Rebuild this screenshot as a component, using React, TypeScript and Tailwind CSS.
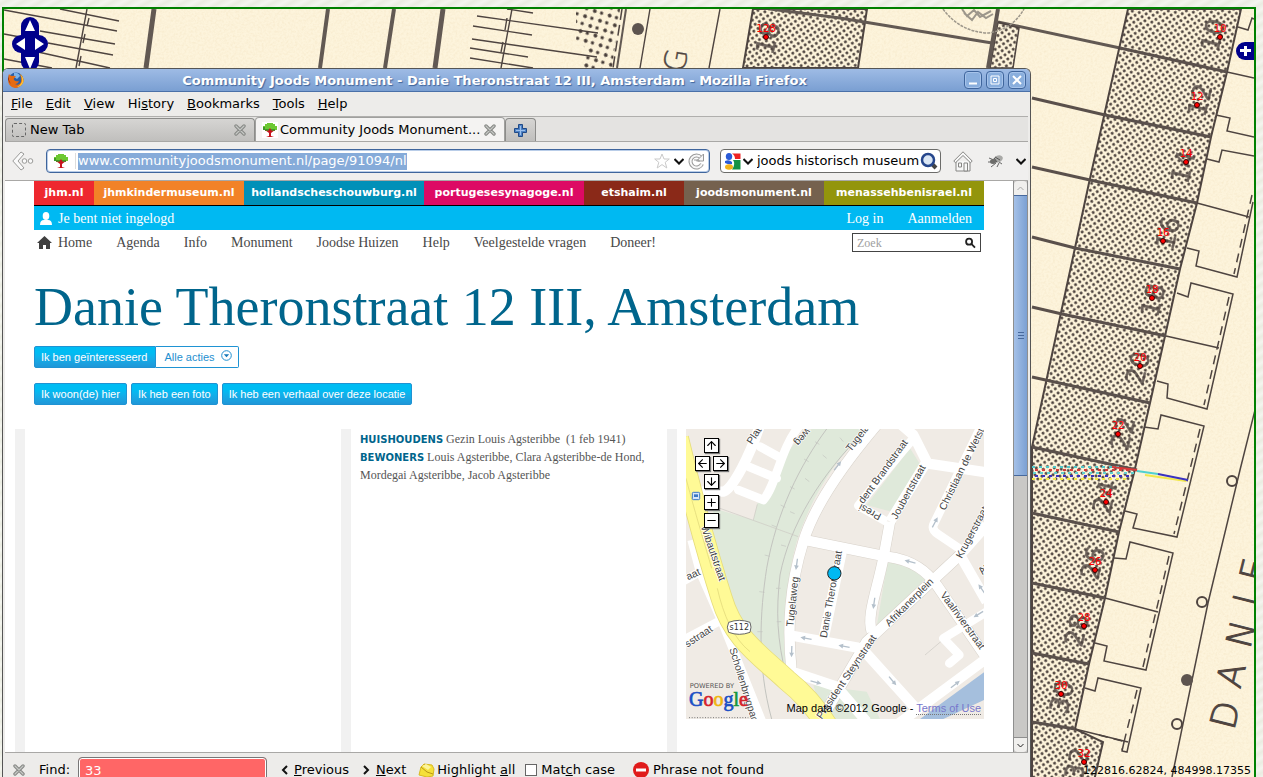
import { ReactNode } from "react";
import { Plus, Minus, ArrowUp, ArrowDown, ArrowLeft, ArrowRight } from "lucide-react";

const houses = [
  { n: "128", x: 766, y: 37, hx: 768, hy: 38 },
  { n: "10", x: 1220, y: 37, hx: 1213, hy: 35 },
  { n: "12", x: 1197, y: 105, hx: 1200, hy: 100 },
  { n: "14", x: 1186, y: 162, hx: 1183, hy: 167 },
  { n: "16", x: 1163, y: 241, hx: 1168, hy: 233 },
  { n: "18", x: 1152, y: 298, hx: 1153, hy: 300 },
  { n: "20", x: 1140, y: 366, hx: 1138, hy: 368 },
  { n: "22", x: 1118, y: 434, hx: 1123, hy: 433 },
  { n: "24", x: 1106, y: 502, hx: 1105, hy: 497 },
  { n: "26", x: 1095, y: 570, hx: 1093, hy: 563 },
  { n: "28", x: 1084, y: 626, hx: 1077, hy: 630 },
  { n: "30", x: 1061, y: 694, hx: 1062, hy: 697 },
  { n: "32", x: 1084, y: 762, hx: 1077, hy: 764 },
];

const streetLetters = [
  { c: "D", x: 1237, y: 718 },
  { c: "A", x: 1243, y: 678 },
  { c: "N", x: 1253, y: 637 },
  { c: "I", x: 1258, y: 603 },
  { c: "E", x: 1266, y: 573 },
];

const menu = ["_File", "_Edit", "_View", "Hi_story", "_Bookmarks", "_Tools", "_Help"];

const sites = [
  { name: "jhm.nl", color: "bg-[#ee282f]" },
  { name: "jhmkindermuseum.nl", color: "bg-[#f28227]" },
  { name: "hollandscheschouwburg.nl", color: "bg-[#0090b8]" },
  { name: "portugesesynagoge.nl", color: "bg-[#dd0a64]" },
  { name: "etshaim.nl", color: "bg-[#8a2918]" },
  { name: "joodsmonument.nl", color: "bg-[#75614e]" },
  { name: "menassehbenisrael.nl", color: "bg-[#93950b]" },
];

const navLinks = ["Agenda", "Info", "Monument", "Joodse Huizen", "Help", "Veelgestelde vragen", "Doneer!"];

const streets = [
  { t: "Tugelaweg", x: 512, y: 82, r: -52 },
  { t: "dent Brandstraat", x: 550, y: 238, r: -54 },
  { t: "Presi", x: 606, y: 268, r: 207 },
  { t: "Joubertstraat", x: 650, y: 285, r: -61 },
  { t: "Christiaan de Wetstraat", x: 795, y: 258, r: -64 },
  { t: "Krugerstraat", x: 845, y: 402, r: -62 },
  { t: "Afrikanerplein", x: 628, y: 606, r: -45 },
  { t: "Vaalrivierstraat", x: 780, y: 510, r: 54 },
  { t: "Danie Theronstraat", x: 440, y: 640, r: -80 },
  { t: "Tugelaweg", x: 340, y: 606, r: -84 },
  { t: "President Steynstraat", x: 425, y: 884, r: -56 },
  { t: "Schollenbrugpad", x: 148, y: 672, r: 73 },
  { t: "Wibautstraat", x: 62, y: 305, r: 71 },
  { t: "aat", x: 24, y: 466, r: -25 },
  { t: "sstraat", x: 22, y: 668, r: -33 },
  { t: "Plats", x: 216, y: 60, r: -57 },
  { t: "weg", x: 378, y: 8, r: 130 },
  { t: "Ar", x: 908, y: 450, r: -50 },
];

const arrows = [
  [473, 122, -52], [350, 418, 98], [378, 640, 190], [492, 664, 190], [335, 680, 92],
  [408, 772, 15], [690, 410, 195], [765, 292, -62], [582, 535, 98], [638, 768, 50],
  [826, 778, -38], [895, 568, 148], [905, 492, 235],
];

function OldMap() {
  return (
    <svg className="absolute top-0 left-0" width="1250" height="772" viewBox="4 9 1250 772" fill="none" stroke="#4e4440">
      <defs>
        <pattern id="hatch" width="5" height="5" patternUnits="userSpaceOnUse" patternTransform="rotate(-34)">
          <circle cx="2.5" cy="2.5" r="1.4" fill="#463c38" stroke="none" />
        </pattern>
        <pattern id="sparse" width="11" height="11" patternUnits="userSpaceOnUse" patternTransform="rotate(-28)">
          <circle cx="3" cy="3" r="1.9" fill="#463c38" stroke="none" />
          <circle cx="8" cy="8" r="1.7" fill="#463c38" stroke="none" />
        </pattern>
        <filter id="grain" x="0" y="0" width="100%" height="100%">
          <feTurbulence type="fractalNoise" baseFrequency="0.45" numOctaves="3" />
          <feColorMatrix values="0 0 0 0 0.85  0 0 0 0 0.7  0 0 0 0 0.45  0.6 0 0 0 -0.22" />
        </filter>
      </defs>
      <rect x="4" y="9" width="1250" height="772" filter="url(#grain)" stroke="none" />

      {/* gardens, top left */}
      <g strokeWidth="1.4">
        <path d="M4 10 117 31M60 9 119 21M40 31 115 44M4 34 20 37M48 43 113 55M4 59 52 68M38 52 110 68" />
        <path d="M87 9 76 68M89 18 87 26M85 34 83 43M81 56 79 66" />
        <path d="M507 9 533 13M477 16 598 33M473 26 532 35M472 39 597 57M470 48 528 57M470 58 533 68" />
        <path d="M512 9 501 68M507 18 505 30M503 42 501 52M650 9 640 68M720 9 709 68" />
      </g>
      <g stroke="#625953">
        <path d="M154 9 146 68M443 9 435 68" strokeWidth="5" />
        <path d="M328 9 320 68M394 9 385 68" strokeWidth="4" />
        <path d="M626 9 617 68" strokeWidth="2" />
      </g>
      <path d="M622 9 613 68" strokeDasharray="11 5" strokeWidth="1.5" />
      <path d="M576 9H620L612 68H579L588 50 576 40Z" fill="url(#sparse)" stroke="none" />
      <circle cx="638" cy="29" r="6" fill="#5d544f" stroke="none" />
      <path d="M753 9H867L858 68H743Z" fill="url(#hatch)" strokeWidth="2" />
      <path d="M770 9 840 18 992 43M998 22 1120 48" stroke="#625953" strokeWidth="3" />
      <path d="M998 22 1019 28 1013 68H990Z" fill="url(#hatch)" strokeWidth="1.5" />
      <path d="M998 9 988 68" strokeWidth="4" stroke="#625953" />
      <g stroke="#9d978b">
        <path d="M943 9Q960 32 988 33Q1012 30 1024 9" strokeWidth="1.5" strokeDasharray="3 1" />
        <path d="M962 9 967 16 974 10 980 17 991 11M964 13 972 20 978 12 986 18 993 14" strokeWidth="2" />
      </g>

      {/* row of houses */}
      <path
        d="M1128 9H1241L1227 72 1211 137 1197 203 1180 269 1165 336 1150 403 1134 473 1119 532 1105 598 1089 664 1075 729 1103 742 1094 781H1032V447L1089 183Z"
        fill="url(#hatch)"
        strokeWidth="2"
      />
      <g stroke="#5a504b" strokeWidth="3">
        <path d="M1120 48 1227 72M1032 98 1105 115 1211 137M1032 167 1090 180 1197 203M1032 237 1075 248 1180 269" />
        <path d="M1032 307 1062 314 1166 336M1032 377 1150 403M1032 447 1137 470M1032 513 1119 532" />
        <path d="M1032 583 1105 598M1032 653 1089 664M1032 722 1075 729" />
      </g>
      <g strokeWidth="1.5">
        <path d="M1238 27 1248 30 1252 18 1254 19M1227 72 1254 78M1216 115 1230 118 1227 131 1254 137" />
        <path d="M1207 159 1219 162 1222 150 1254 156M1197 203 1249 217" />
        <path d="M1253 202 1237 277 1196 266 1199 251 1187 248" />
        <path d="M1177 293 1188 297 1191 283 1233 294 1207 409 1167 398 1168 384 1157 381M1166 336 1219 348" />
        <path d="M1144 427 1158 429 1161 415 1204 426 1177 537 1133 528 1137 514 1125 511" />
        <path d="M1114 558 1126 559 1130 542 1173 553 1146 670 1104 661 1107 646 1095 643M1105 598 1158 612" />
        <path d="M1085 688 1095 691 1098 678 1141 688 1127 752 1122 751 1124 742M1075 729 1128 742" />
        <path d="M1255 410 1240 470 1208 603 1172 777" />
      </g>
      <path
        d="M1252 195 1234 274M1229 297 1204 405M1200 429 1174 534M1169 556 1143 667M1137 690 1122 750M1099 735 1126 742"
        strokeDasharray="9 6"
        strokeWidth="1.5"
      />
      <g strokeWidth="2">
        <circle cx="1232" cy="481" r="5" />
        <circle cx="1202" cy="602" r="5" />
        <circle cx="1177" cy="724" r="5" />
      </g>
      <circle cx="1187" cy="680" r="6" fill="#5d544f" stroke="none" />

      {/* coloured misprint across number 24 */}
      <g strokeWidth="2" strokeDasharray="3 4">
        <path d="M1032 467H1120" stroke="#4fc6c8" />
        <path d="M1035 470H1133" stroke="#d93a3a" />
        <path d="M1033 473H1134" stroke="#5fd0d0" />
        <path d="M1035 476H1132" stroke="#3a32c0" />
        <path d="M1032 479H1130" stroke="#f2e84a" />
      </g>
      <path d="M1112 467 1137 470" stroke="#d93a3a" strokeWidth="2" />
      <path d="M1137 471 1158 474" stroke="#4fd0d0" strokeWidth="2" />
      <path d="M1145 475 1186 481" stroke="#f2e84a" strokeWidth="2" />
      <path d="M1158 474 1188 480" stroke="#3a32c0" strokeWidth="2" />

      <g fill="#4e4440" stroke="#4e4440" strokeWidth="0.4" textAnchor="middle" fontFamily="'DejaVu Sans', sans-serif">
        {streetLetters.map(l => (
          <text key={l.c} transform={`translate(${l.x} ${l.y}) rotate(-76)`} fontSize="35" fontWeight="200" strokeWidth="1">{l.c}</text>
        ))}
        <text transform="translate(686 62) rotate(-80)" fontSize="30" fontWeight="200">G</text>
        {houses.map(h => (
          <text key={h.n} transform={`translate(${h.hx} ${h.hy}) rotate(-76)`} y="9" fontSize="26" opacity="0.8">
            {h.n === "128" ? "18" : h.n}
          </text>
        ))}
      </g>
      {houses.map(h => (
        <g key={h.n}>
          <circle cx={h.x} cy={h.y} r="2.5" fill="#f00" stroke="#300" />
          <text x={h.x} y={h.y - 5} fill="#f00" stroke="none" textAnchor="middle" fontSize="11" fontFamily="'DejaVu Sans Mono', monospace">
            {h.n}
          </text>
        </g>
      ))}

      {/* pan and layer controls */}
      <g fill="#00008b" stroke="none">
        <rect x="21" y="17" width="18" height="54" rx="9" />
        <rect x="12" y="35" width="36" height="18" rx="9" />
        <path d="M1254 42H1245A9 9 0 0 0 1245 60H1254Z" />
      </g>
      <g fill="#fff" stroke="none">
        <path d="M30 20 35 31H25ZM30 69 35 57H25ZM16 44 25 38V50ZM44 44 35 38V50Z" />
        <path d="M1244 46H1247V49H1251V52H1247V56H1244V52H1240V49H1244Z" />
      </g>
    </svg>
  );
}

function FirefoxLogo() {
  return (
    <svg width="18" height="18" viewBox="0 0 18 18">
      <circle cx="9" cy="9" r="7.5" fill="#2a5fa8" />
      <path d="M7 2Q11 1 13 5L10 8 7 6Z" fill="#7db4ea" />
      <path d="M2 3Q3 5 5 5 8 4 9 6 6 7 7 9 9 11 12 10 11 13 8 13 12 15 14 11 15 7 13 3 18 7 16 12 13 17 8 17 1 16 1 8Z" fill="#e66b13" />
      <path d="M13 3Q18 7 16 12 14 16 10 16 15 13 15 9 15 6 13 3Z" fill="#fbc437" />
      <path d="M2 3Q1 9 4 13 2 12 1 8Z" fill="#8f2a10" />
    </svg>
  );
}

function TreeIcon() {
  return (
    <svg className="bg-white" width="16" height="16" viewBox="0 0 16 16">
      <path d="M5 1H11V2H13V4H15V8H13V9H3V8H1V4H3V2H5Z" fill="#6cc832" />
      <path d="M3 7H13V9H3ZM1 5H3V8H1Z" fill="#3f9a28" />
      <path d="M3 8 7 11V14L4 15H12L9 14V11L13 8 10 9 8 6 6 9Z" fill="#c8141e" />
    </svg>
  );
}

function CloseX() {
  return (
    <svg width="12" height="12" viewBox="0 0 12 12" strokeLinecap="round">
      <path d="M2 2 10 10M10 2 2 10" stroke="#868885" strokeWidth="3.4" />
      <path d="M2 2 10 10M10 2 2 10" stroke="#c6c8c5" strokeWidth="1.2" />
    </svg>
  );
}

function Chevron() {
  return (
    <svg width="10" height="7" viewBox="0 0 10 7" fill="none" stroke="#111" strokeWidth="2">
      <path d="M0.5 1 5 5.5 9.5 1" />
    </svg>
  );
}

function Accel({ text }: { text: string }) {
  const i = text.indexOf("_");
  return (
    <span>
      {text.slice(0, i)}
      <u className="underline decoration-black decoration-1 underline-offset-1">{text[i + 1]}</u>
      {text.slice(i + 2)}
    </span>
  );
}

function TitleButton({ label, children }: { label: string; children: ReactNode }) {
  return (
    <button aria-label={label} className="size-[18px] rounded border border-[#3f659c] bg-[#89aedd] shadow-[inset_0_0_0_1px_#a6c3ea]">
      <svg width="16" height="16" viewBox="0 0 16 16" fill="none">{children}</svg>
    </button>
  );
}

function BlueButton({ children }: { children: ReactNode }) {
  return (
    <button className="h-[22px] rounded-xs border border-[#1f93d3] bg-linear-to-b from-[#00bcf3] from-30% to-[#1f97d8] px-1.5 text-[11px] text-white">
      {children}
    </button>
  );
}

function MapButton({ label, children }: { label: string; children: ReactNode }) {
  return (
    <button
      aria-label={label}
      className="flex size-[15px] items-center justify-center border border-black bg-white text-black shadow-[1px_1px_1px_#777]"
    >
      {children}
    </button>
  );
}

function StreetMap() {
  return (
    <div className="relative h-[290px] overflow-hidden bg-[#f0ebe5]">
      <svg className="absolute top-0 left-0" width="298" height="290" viewBox="18 12 894 870" fill="none">
        <path
          d="M395 12H560C450 120 390 230 350 350C315 480 310 620 330 740L345 790 160 560 100 400 100 250 220 285 232 235C290 220 290 150 310 110C330 60 370 30 395 12Z"
          fill="#dfe9da"
        />
        <path d="M690 70 725 125 640 262 560 240ZM622 412C680 412 715 440 738 460L590 605ZM400 780 560 800 600 882H430Z" fill="#dfe9da" />
        <path d="M912 742V825L790 882H720Z" fill="#a5bfdd" />
        <g stroke="#c3c4bf" strokeWidth="3">
          <path d="M440 12C360 120 290 260 260 430C240 560 230 720 275 882" />
          <path d="M560 12C420 150 330 300 300 450C288 560 290 640 320 760" />
          <path d="M120 250 355 335M220 285 232 238M735 690 800 635" stroke="#ccc8c2" strokeWidth="2" />
          <path
            d="M405 50 418 58M372 102 386 110M330 185 344 192M302 240 316 247M275 300 289 306M254 390 270 394M238 500 254 502M232 620 248 620M480 38 490 50M428 90 440 100M375 160 388 170M330 260 344 266M303 360 318 364M288 490 302 490M290 590 304 590"
            strokeWidth="2"
          />
        </g>
        <g stroke="#d8d2ca" strokeWidth="34">
          <path d="M590 0C480 130 400 250 370 350C330 480 320 600 335 740" />
          <path d="M375 345 620 395C700 405 740 440 770 480L920 700M630 290 610 400C590 500 560 570 575 620M840 390 560 650 420 890" />
        </g>
        <g stroke="#fff" strokeWidth="31" strokeLinejoin="round">
          <path d="M590 0C480 130 400 250 370 350C330 480 320 600 335 740L470 785" />
          <path d="M375 345 620 395C700 405 740 440 770 480L920 700" />
          <path d="M630 290 610 400C590 500 560 570 575 620" />
          <path d="M665 0 700 30 740 110 630 290M740 115 920 142" />
          <path d="M920 300 840 390 560 650 420 890M840 390 920 530" />
          <path d="M485 380 430 645M325 630 545 670 712 855M920 700 650 900M470 785 560 890" />
          <path d="M240 0C210 90 160 190 130 200H45" />
          <path d="M35 345 60 440 130 600 250 900M10 468 60 440M10 645 115 590" strokeWidth="26" />
          <path d="M700 40C640 110 560 210 535 242L620 290" strokeWidth="26" />
          <path d="M905 0 760 300Q755 315 775 328L840 372" strokeWidth="26" />
          <path d="M920 560 790 640 838 690 808 715" strokeWidth="26" strokeLinecap="round" />
          <path d="M360 0C300 70 290 180 250 225L175 195M240 65 300 98M208 126 290 160" strokeWidth="26" strokeLinecap="round" />
        </g>
        <path d="M-6 40C40 230 80 380 125 520C160 640 240 690 320 765C370 805 400 840 440 900" stroke="#e6dd7c" strokeWidth="66" />
        <path d="M-6 40C40 230 80 380 125 520C160 640 240 690 320 765C370 805 400 840 440 900" stroke="#fffa96" strokeWidth="61" />
        <path d="M18 160C50 280 75 360 95 430M112 490C130 570 160 640 210 680" stroke="#ddd376" strokeWidth="2" />
        {arrows.map(([x, y, r]) => (
          <path
            key={`${x}-${y}`}
            transform={`translate(${x} ${y}) rotate(${r})`}
            d="M-17-2H3V-7L17 0 3 7V2H-17Z"
            fill="#b4c0cb"
          />
        ))}
        <g fontFamily="'Liberation Sans', sans-serif" fontSize="31" fill="#444" stroke="#fff" strokeWidth="4" paintOrder="stroke">
          {streets.map(s => (
            <text key={s.t + s.x} transform={`translate(${s.x} ${s.y}) rotate(${s.r})`}>{s.t}</text>
          ))}
        </g>
        <path d="M146 592Q178 580 210 592 216 606 210 622 178 634 146 622 138 606 146 592Z" fill="#fff" stroke="#666" strokeWidth="3" />
        <text x="178" y="616" textAnchor="middle" fontFamily="'DejaVu Sans', sans-serif" fontSize="24" fill="#333">s112</text>
        <rect x="37" y="202" width="22" height="22" rx="3" fill="#d7e6fa" stroke="#3b78c4" strokeWidth="3" />
        <path d="M42 208H54V216H42Z" fill="#3b78c4" />
        <circle cx="463" cy="445" r="20" fill="#00b9f2" stroke="#222" strokeWidth="3" />
        <text x="27" y="843" fontFamily="'Liberation Serif', serif" fontSize="60" strokeWidth="2">
          <tspan fill="#1b4fc4" stroke="#1b4fc4">G</tspan>
          <tspan fill="#d5232b" stroke="#d5232b">o</tspan>
          <tspan fill="#efb50f" stroke="#efb50f">o</tspan>
          <tspan fill="#1b4fc4" stroke="#1b4fc4">g</tspan>
          <tspan fill="#17963a" stroke="#17963a">l</tspan>
          <tspan fill="#d5232b" stroke="#d5232b">e</tspan>
        </text>
        <text x="29" y="789" fontFamily="'DejaVu Sans', sans-serif" fontSize="20" fill="#555">POWERED BY</text>
        <path d="M27 878H205" stroke="#777" strokeWidth="3" strokeDasharray="3 5" />
      </svg>
      <div className="absolute top-[9px] left-[9px] flex flex-col items-center gap-[3px]">
        <MapButton label="Omhoog"><ArrowUp size={13} strokeWidth={2} /></MapButton>
        <div className="flex gap-[3px]">
          <MapButton label="Links"><ArrowLeft size={13} strokeWidth={2} /></MapButton>
          <MapButton label="Rechts"><ArrowRight size={13} strokeWidth={2} /></MapButton>
        </div>
        <MapButton label="Omlaag"><ArrowDown size={13} strokeWidth={2} /></MapButton>
        <div className="mt-[3px] flex flex-col gap-[3px]">
          <MapButton label="Inzoomen"><Plus size={13} strokeWidth={2} /></MapButton>
          <MapButton label="Uitzoomen"><Minus size={13} strokeWidth={2} /></MapButton>
        </div>
      </div>
      <div className="absolute right-[3px] bottom-1 text-[11px] leading-[14px] text-black">
        Map data ©2012 Google - <a href="#terms" className="border-b border-dotted border-[#777] text-[#7777cc]">Terms of Use</a>
      </div>
    </div>
  );
}

function Site() {
  return (
    <div className="min-w-0 flex-1 overflow-hidden bg-white font-['Liberation_Sans',sans-serif]">
      <div className="px-[29px]">
        <nav className="grid h-[25px] grid-cols-[60fr_150fr_180fr_160fr_100fr_140fr_160fr] border-b border-black font-['DejaVu_Sans',sans-serif] text-[11px] font-bold text-white">
          {sites.map(s => (
            <a key={s.name} href="#site" className={`${s.color} min-w-0 text-center leading-[23px] whitespace-nowrap`}>{s.name}</a>
          ))}
        </nav>
        <div className="flex h-6 items-center bg-[#00b9f2] px-1.5 pt-px font-['Liberation_Serif',serif] text-sm text-white">
          <svg width="12" height="14" viewBox="0 0 12 14" fill="#fff">
            <ellipse cx="6" cy="4" rx="3.3" ry="4" />
            <path d="M0 13Q0 8 4 8H8Q12 8 12 13Z" />
          </svg>
          <span className="ml-1.5 flex-1">Je bent niet ingelogd</span>
          <a href="#login">Log in</a>
          <a href="#aanmelden" className="mr-1.5 ml-6">Aanmelden</a>
        </div>
        <nav className="flex h-[25px] items-center gap-6 px-[3px] font-['Liberation_Serif',serif] text-sm text-[#484848]">
          <a href="#home" className="flex items-center gap-1.5">
            <svg width="15" height="13" viewBox="0 0 15 13" fill="#404040">
              <path d="M7.5 0 15 7H13V13H9V9H6V13H2V7H0Z" />
            </svg>
            Home
          </a>
          {navLinks.map(l => (
            <a key={l} href="#nav">{l}</a>
          ))}
          <label className="ml-auto flex h-[19px] w-[129px] items-center border border-[#444] px-1">
            <input aria-label="Zoek" placeholder="Zoek" className="w-full min-w-0 text-xs outline-none placeholder:text-[#a0a0a0]" />
            <svg width="12" height="12" viewBox="0 0 12 12" fill="none" stroke="#222" strokeWidth="2">
              <circle cx="4.5" cy="4.5" r="3.3" />
              <path d="M7 7 11 11" />
            </svg>
          </label>
        </nav>
        <h1 className="mt-[25px] font-['Liberation_Serif',serif] text-[54px] leading-[54px] whitespace-nowrap text-[#00658c]">
          Danie Theronstraat 12 III, Amsterdam
        </h1>
        <div className="mt-3 flex">
          <button className="h-[22px] rounded-l-xs border border-[#1f93d3] bg-linear-to-b from-[#00bcf3] from-30% to-[#1f97d8] pr-2 pl-1.5 text-[11px] text-white">
            Ik ben geïnteresseerd
          </button>
          <div className="relative">
            <select
              aria-label="Alle acties"
              className="h-[22px] w-[83px] appearance-none rounded-r-xs border border-l-0 border-[#1f93d3] bg-white pl-2 text-[11px] text-[#1f8fd0]"
            >
              <option>Alle acties</option>
            </select>
            <svg className="pointer-events-none absolute top-1 right-[7px]" width="11" height="11" viewBox="0 0 11 11" fill="none">
              <circle cx="5.5" cy="5.5" r="4.8" stroke="#1f8fd0" />
              <path d="M2.8 4.3H8.2L5.5 7.2Z" fill="#1578b8" />
            </svg>
          </div>
        </div>
        <div className="mt-[15px] flex gap-1">
          <BlueButton>Ik woon(de) hier</BlueButton>
          <BlueButton>Ik heb een foto</BlueButton>
          <BlueButton>Ik heb een verhaal over deze locatie</BlueButton>
        </div>
      </div>
      <div className="mt-6 mr-[29px] ml-2.5 grid h-[330px] grid-cols-[326fr_326fr_317fr]">
        <div className="border-l-10 border-[#f1f1f1]" />
        <div className="border-l-10 border-[#f1f1f1] pt-px pl-[9px] font-['Liberation_Serif',serif] text-xs leading-[18px] text-[#555]">
          <p>
            <b className="font-['DejaVu_Sans',sans-serif] text-[10px] leading-[10px] text-[#00658c]">HUISHOUDENS</b> Gezin Louis Agsteribbe&nbsp; (1 feb 1941)
          </p>
          <p className="pr-2">
            <b className="font-['DejaVu_Sans',sans-serif] text-[10px] leading-[10px] text-[#00658c]">BEWONERS</b> Louis Agsteribbe, Clara Agsteribbe-de Hond,
            Mordegai Agsteribbe, Jacob Agsteribbe
          </p>
        </div>
        <div className="border-l-10 border-[#f1f1f1] pl-[9px]">
          <StreetMap />
        </div>
      </div>
    </div>
  );
}

function Scrollbar() {
  return (
    <div className="flex w-[15px] flex-col border-x border-[#8f8f8f] bg-[#c9c8c6]">
      <button aria-label="Up" className="flex h-[14px] items-center justify-center rounded-t bg-[#f0efed]">
        <svg width="7" height="5" viewBox="0 0 7 5" fill="none" stroke="#a8a8a8"><path d="M0.5 4 3.5 1 6.5 4" /></svg>
      </button>
      <div className="flex h-[281px] flex-col items-center justify-center gap-0.5 border-y border-[#47699d] bg-linear-to-r from-[#a5c1e8] to-[#7ba0d3]">
        <i className="h-px w-1.5 bg-[#47699d]" />
        <i className="h-px w-1.5 bg-[#47699d]" />
        <i className="h-px w-1.5 bg-[#47699d]" />
      </div>
      <div className="flex-1" />
      <button aria-label="Down" className="flex h-[15px] items-center justify-center rounded-b border-t border-[#8f8f8f] bg-[#f0efed]">
        <svg width="7" height="5" viewBox="0 0 7 5" fill="none" stroke="#222"><path d="M0.5 1 3.5 4 6.5 1" /></svg>
      </button>
    </div>
  );
}

function Browser() {
  return (
    <div className="absolute top-[68px] right-[232px] bottom-[-10px] left-[2px] flex flex-col overflow-hidden rounded-t-md border border-b-0 border-[#555] bg-[#edecea] font-['DejaVu_Sans',sans-serif] text-[13px] text-black">
      <header className="flex h-[23px] items-center border-b border-[#4a70a8] bg-linear-to-b from-[#9ebbe5] to-[#7a9fd2] px-1">
        <FirefoxLogo />
        <div className="min-w-0 flex-1 pt-px text-center font-bold whitespace-nowrap text-white [text-shadow:1px_1px_1px_#3f659c]">
          Community Joods Monument - Danie Theronstraat 12 III, Amsterdam - Mozilla Firefox
        </div>
        <div className="flex gap-1">
          <TitleButton label="Minimize"><path d="M4 11.5H12" stroke="#fff" strokeWidth="2" /></TitleButton>
          <TitleButton label="Maximize"><path d="M4 4H12V12H4ZM6.5 6.5H9.5V9.5H6.5Z" stroke="#fff" /></TitleButton>
          <TitleButton label="Close"><path d="M4 4 12 12M12 4 4 12" stroke="#fff" strokeWidth="2" /></TitleButton>
        </div>
      </header>
      <div className="flex min-h-0 flex-1 flex-col px-0.5">
        <nav className="flex h-[25px] items-center gap-[13px] border-b border-[#b0afad] px-1.5">
          {menu.map(m => (
            <button key={m}><Accel text={m} /></button>
          ))}
        </nav>
        <div className="flex h-[25px] items-end border-b border-[#a9a8a6] bg-[#e4e3e1]">
          <div className="flex h-[23px] w-[250px] items-center rounded-t border border-b-0 border-[#8c8c8a] bg-linear-to-b from-[#d6d5d3] to-[#c0bfbd] pr-2 pl-1.5">
            <i className="size-[14px] rounded-xs border border-dashed border-[#666]" />
            <span className="ml-1 flex-1">New Tab</span>
            <button aria-label="Close tab"><CloseX /></button>
          </div>
          <div className="flex h-6 w-[250px] items-center rounded-t border border-b-0 border-[#a0a09e] bg-[#f4f3f2] pr-2 pl-1.5">
            <TreeIcon />
            <span className="ml-0.5 flex-1 whitespace-nowrap">Community Joods Monument...</span>
            <button aria-label="Close tab"><CloseX /></button>
          </div>
          <button aria-label="Open new tab" className="flex h-[23px] w-[31px] items-center justify-center rounded-t border border-b-0 border-[#8c8c8a] bg-linear-to-b from-[#d6d5d3] to-[#c0bfbd]">
            <svg width="13" height="13" viewBox="0 0 13 13">
              <path d="M4.5 0.5H8.5V4.5H12.5V8.5H8.5V12.5H4.5V8.5H0.5V4.5H4.5Z" fill="#4d82c6" stroke="#204a87" />
              <path d="M6.5 2V11M2 6.5H11" stroke="#9cc0ec" />
            </svg>
          </button>
        </div>
        <div className="flex h-[39px] items-center border-b border-[#a9a8a6] bg-[#f0efee] pr-0.5 pl-[7px]">
          <button aria-label="Back" className="mr-3">
            <svg width="22" height="20" viewBox="0 0 22 20" fill="#fafafa" stroke="#9a9a98">
              <path d="M9 1 0.8 10 9 19 12 17 6 10 12 3Z" />
              <circle cx="12.5" cy="10" r="2.3" />
              <circle cx="18.5" cy="10" r="2.3" />
            </svg>
          </button>
          <div className="flex h-6 flex-1 items-center rounded-sm border border-[#3f659c] bg-white pr-1 shadow-[inset_0_0_0_1px_#b9cde8]">
            <span className="mr-0.5 border-r border-[#ddd] px-1.5"><TreeIcon /></span>
            <input
              aria-label="Location"
              readOnly
              value="www.communityjoodsmonument.nl/page/91094/nl"
              className="field-sizing-content h-[17px] bg-[#86abd9] text-white outline-none"
            />
            <span className="flex-1" />
            <svg width="16" height="16" viewBox="0 0 16 16" fill="#fff" stroke="#c9c9c9">
              <path d="M8 1 10 6H15.3L11.2 9.3 12.8 15 8 11.6 3.2 15 4.8 9.3 0.7 6H6Z" />
            </svg>
            <button aria-label="History" className="mx-1"><Chevron /></button>
            <button aria-label="Reload">
              <svg width="17" height="17" viewBox="0 0 17 17" fill="none">
                <path d="M13 4.5A6 6 0 1 0 14 11" stroke="#999" strokeWidth="4" />
                <path d="M13 4.5A6 6 0 1 0 14 11" stroke="#f7f7f7" strokeWidth="2" />
                <path d="M15.5 1V8H8.5Z" fill="#f7f7f7" stroke="#999" />
                <path d="M6 7H11V9" stroke="#999" />
              </svg>
            </button>
          </div>
          <div className="ml-2.5 flex h-6 w-[221px] items-center rounded-sm border border-[#6c6c6a] bg-white pr-0.5 pl-[3px]">
            <svg width="17" height="17" viewBox="0 0 17 17">
              <path d="M8 0.5H16.5V6H11Q11 2 8 0.5Z" fill="#e22" />
              <path d="M9 7H16.5V16.5H8Q12 11 9 7Z" fill="#159244" />
              <ellipse cx="5" cy="3.5" rx="3.2" ry="3.5" fill="#2a5bd7" />
              <path d="M1 8Q5 6 8 9V11Q5 12 1 10Z" fill="#2a5bd7" />
              <ellipse cx="5" cy="14" rx="4" ry="2.8" fill="#f2b41b" />
            </svg>
            <button aria-label="Search engine" className="mr-1 ml-0.5"><Chevron /></button>
            <input aria-label="Search" defaultValue="joods historisch museum" className="w-0 flex-1 outline-none" />
            <svg width="18" height="18" viewBox="0 0 18 18" fill="none">
              <path d="M11 11 16 16" stroke="#444" strokeWidth="4" />
              <circle cx="8" cy="8" r="6" fill="#dbe7f5" stroke="#26478d" strokeWidth="2.5" />
            </svg>
          </div>
          <button aria-label="Home page" className="ml-3">
            <svg width="20" height="21" viewBox="0 0 20 21" fill="#f8f8f8" stroke="#868684">
              <path d="M3 10V20H17V10" />
              <path d="M10 0.8 0.8 10 2.5 11.8 10 4.5 17.5 11.8 19.2 10Z" />
              <path d="M5.5 12H8.5V16H5.5ZM11 12H14.5V20H11Z" />
            </svg>
          </button>
          <button aria-label="Firebug" className="mr-3 ml-[15px]">
            <svg width="16" height="14" viewBox="0 0 16 14">
              <path d="M1 4 6 6M0 8 6 8M3 13 8 9M9 13 11 9M14 10 11 8" stroke="#666" />
              <ellipse cx="10" cy="5" rx="5" ry="3.4" fill="#a9a9a7" transform="rotate(-20 10 5)" />
              <ellipse cx="5" cy="7.5" rx="3" ry="2.5" fill="#6c6c6a" />
              <path d="M7 3 12 6M6 4 9 8" stroke="#555" />
            </svg>
          </button>
          <button aria-label="More"><Chevron /></button>
        </div>
        <div className="flex min-h-0 flex-1">
          <Site />
          <Scrollbar />
        </div>
        <div className="flex h-[35px] shrink-0 items-center border-t border-[#a9a8a6] pl-2">
          <button aria-label="Close find bar"><CloseX /></button>
          <label htmlFor="find" className="mr-2 ml-[14px]">Find:</label>
          <input
            id="find"
            defaultValue="33"
            className="h-[27px] w-[189px] rounded border border-[#777] bg-[#ff6666] px-1.5 text-white shadow-[inset_0_0_0_1px_#fff] outline-none"
          />
          <button className="ml-3.5 flex items-center gap-1.5">
            <svg width="7" height="10" viewBox="0 0 7 10" fill="none" stroke="#111" strokeWidth="2"><path d="M6 1 2 5 6 9" /></svg>
            <Accel text="_Previous" />
          </button>
          <button className="ml-3.5 flex items-center gap-1.5">
            <svg width="7" height="10" viewBox="0 0 7 10" fill="none" stroke="#111" strokeWidth="2"><path d="M1 1 5 5 1 9" /></svg>
            <Accel text="_Next" />
          </button>
          <button className="ml-3 flex items-center gap-0.5">
            <svg width="17" height="16" viewBox="0 0 17 16">
              <path d="M1 13 3 5 6 2 14 3 16 7 15 14 9 15Z" fill="#f5e03a" stroke="#d8b921" />
              <path d="M3 5 9 10 15 12M6 2 9 6" stroke="#b9971a" fill="none" />
              <path d="M4 4 8 2 13 5 10 8Z" fill="#fcf49a" />
            </svg>
            <Accel text="Highlight _all" />
          </button>
          <label className="ml-2.5 flex items-center gap-1">
            <input type="checkbox" className="size-3 appearance-none border border-[#666] bg-white" />
            <Accel text="Mat_ch case" />
          </label>
          <svg className="mr-1 ml-[18px]" width="16" height="16" viewBox="0 0 16 16">
            <circle cx="8" cy="8" r="8" fill="#e01b1b" />
            <path d="M3 6.5H13V9.5H3Z" fill="#fff" />
          </svg>
          <span>Phrase not found</span>
        </div>
      </div>
    </div>
  );
}

export default function App() {
  return (
    <div className="relative h-screen overflow-hidden bg-[#eff1e8] bg-[repeating-linear-gradient(150deg,#f4f5ef_0px,#eaece1_4px,#f4f5ef_9px)]">
      <div className="absolute top-[7px] right-[7px] bottom-[-4px] left-[2px] overflow-hidden border-2 border-[#008000] bg-[#fdf4dc]">
        <OldMap />
        <div className="absolute right-[3px] bottom-[1px] font-['DejaVu_Sans',sans-serif] text-[11px] leading-[14px] text-black">
          122816.62824, 484998.17355
        </div>
      </div>
      <Browser />
    </div>
  );
}
